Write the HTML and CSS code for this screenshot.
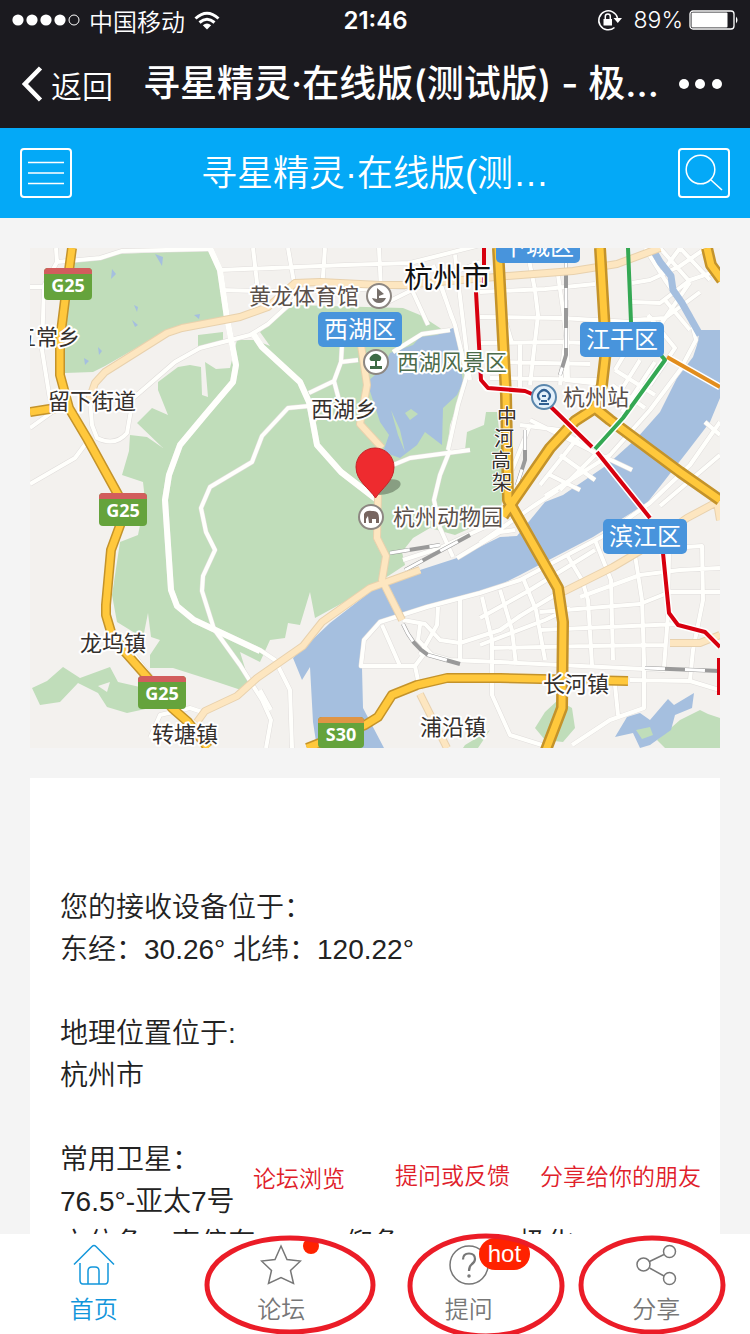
FILE: index.html
```
<!DOCTYPE html>
<html lang="zh-CN">
<head>
  <meta charset="UTF-8">
  <meta name="viewport" content="width=device-width, initial-scale=1.0">
  <title>寻星精灵·在线版(测试版)</title>
  <link rel="stylesheet" href="styles.css">
</head>
<body>

  <!-- Phone status bar -->
  <div class="status-bar">
    <div class="status-left">
      <svg class="signal" viewBox="0 0 68 12" width="68" height="12">
        <g fill="#fff">
          <circle cx="6" cy="6" r="5.6"/><circle cx="20" cy="6" r="5.6"/>
          <circle cx="34" cy="6" r="5.6"/><circle cx="48" cy="6" r="5.6"/>
        </g>
        <circle cx="62" cy="6" r="5" fill="none" stroke="#fff"/>
      </svg>
      <span>中国移动</span>
      <svg viewBox="0 0 26 19" width="26" height="19">
        <g fill="none" stroke="#fff" stroke-width="3">
          <path d="M1.5 7.5 Q13 -3 24.5 7.5"/>
          <path d="M5.5 11.5 Q13 5 20.500 11.5"/>
        </g>
        <path d="M13 18.500 L8.800 14.200 Q13 11 17.200 14.200 Z" fill="#fff"/>
      </svg>
    </div>
    <span class="clock">21:46</span>
    <div class="status-right">
      <svg viewBox="0 0 26 24" width="26" height="24">
        <path d="M17.500 19.500 A9.500 9.500 0 1 1 20.500 10" fill="none" stroke="#fff" stroke-width="1.500"/>
        <path d="M16.500 10 h8.500 l-4.200 5 Z M6.500 11 h8.500 v6.500 h-8.500 Z" fill="#fff"/>
        <path d="M8.300 11 V8.500 a2.500 2.500 0 0 1 5 0 V11" fill="none" stroke="#fff" stroke-width="1.500"/>
      </svg>
      <span class="percent">89%</span>
      <svg viewBox="0 0 50 20" width="50" height="20">
        <rect x="1" y="1" width="44" height="18" rx="3" fill="none" stroke="#fff" stroke-width="1.300"/>
        <rect x="2.500" y="2.500" width="36" height="15" rx="1" fill="#fff"/>
        <path d="M47 6.500 q3 3.500 0 7 Z" fill="#fff"/>
      </svg>
    </div>
  </div>

  <!-- Browser navigation -->
  <nav class="nav-bar">
    <button class="back-button">
      <svg viewBox="0 0 21 36" width="21" height="36"><path d="M18.500 2 L3 18 L18.500 34" fill="none" stroke="#fff" stroke-width="4.500"/></svg>
      返回
    </button>
    <div class="nav-title">寻星精灵·在线版(测试版) - 极…</div>
    <button class="more-button" aria-label="更多">
      <svg viewBox="0 0 44 10" width="44" height="10" fill="#fff"><circle cx="5" cy="5" r="5"/><circle cx="21" cy="5" r="5"/><circle cx="38" cy="5" r="5"/></svg>
    </button>
  </nav>

  <!-- App header -->
  <header class="header">
    <button class="square-button" aria-label="菜单">
      <svg viewBox="0 0 48 46" width="48" height="46" stroke="#fff" stroke-width="1.500"><path d="M6 12.500 H42 M6 23 H42 M6 33.500 H42"/></svg>
    </button>
    <h1>寻星精灵·在线版(测…</h1>
    <button class="square-button" aria-label="搜索">
      <svg viewBox="0 0 48 46" width="48" height="46" fill="none" stroke="#fff" stroke-width="1.500"><circle cx="20.500" cy="19.500" r="14.300"/><path d="M31 30 L42 40"/></svg>
    </button>
  </header>

  <main class="content">
    <svg class="map" viewBox="30 248 690 500">
      <defs>
        <g id="streets">
          <!-- west -->
          <path d="M56 248 L57 262 L100 258 L122 251 L212 249 M57 262 L44 286 L42 350 L50 400 M30 287 H44 M30 428 L55 410"/>
          <path d="M90 400 L92 425 L97 438 Q115 447 127 433 L131 410 M90 438 L75 458 L30 484"/>
          <path d="M131 400 L175 362 L200 348 L250 335 L268 324 L305 290"/>
          <path d="M210 248 L220 270 L227 318 L236 365 L233 382 L205 415 L180 445 L169 475 L165 500 L171 590 L177 606 L194 620 L260 651 M252 332 L262 347 L300 382 L309 402 L317 445 L341 472 L376 499" stroke-width="6"/>
          <path d="M309 406 L288 408 L262 436 L252 462 L210 487 L201 508 L206 532 L215 550 L203 576 L202 591 L214 629 L240 665 L262 700 L271 720 L266 748 M309 393 L334 381 L341 362 L342 345 M334 381 L339 400 M341 362 L358 360 M393 465 L410 458 L470 450 M393 352 L422 334 L450 330"/>
          <path d="M450 450 L440 475 L434 500 L440 528 L453 557 M467 375 L458 405 L448 450"/>
          <!-- north grid -->
          <path d="M220 270 L345 265 L410 263 L500 240 M253 248 L259 300 M288 248 L297 300 M325 248 L322 290 M379 248 L381 290 M220 290 L300 292 L405 287 M380 306 L412 290 L480 262 M433 265 L455 325 L467 375 M412 290 L428 325 M440 282 L452 318 M455 255 L470 380"/>
          <path d="M528 255 L535 290 L538 315 L530 385 M558 275 L563 310 L566 335 L560 385 M480 292 L545 289 L595 284 M480 317 L560 318 L632 322 M480 343 L560 342 L640 345 M490 362 L590 364 M490 378 L600 380 M520 343 L520 390 M505 320 L512 343"/>
          <path d="M566 335 L566 380 L600 384 M566 300 L568 380 M530 420 L590 450 L632 470 M530 425 L512 470 M520 425 L560 430 L605 460 M550 475 L580 490 M560 455 L595 480 M580 435 L540 485 M600 450 L560 490"/>
          <!-- east bank -->
          <path d="M632 283 L650 280 L680 266 L706 248 M632 302 L660 303 L690 280 L720 270 M632 320 L665 318 L700 292 M645 248 L665 280 L690 315 L696 340 L680 370 L650 410 L610 455 L545 496 M660 248 L690 282 M680 248 L710 280 M660 275 L680 248 M690 282 L650 340 M665 300 L690 330 M648 315 L675 348 L650 385"/>
          <path d="M615 370 L655 395 M612 385 L645 408 M640 360 L615 400 M655 362 L622 412 M630 345 L615 370"/>
          <path d="M480 543 L535 505 L558 490 M457 558 L500 532 L515 530 M403 560 L440 548 L500 520"/>
          <path d="M720 422 L690 465 L650 503 L605 535 L520 580 L480 593 L427 607 L380 622 L364 640 L361 666 L415 666 L427 650 M705 422 L720 435 M660 506 L720 455"/>
          <!-- south grid -->
          <path d="M403 620 L425 624 L440 640 L460 643 L500 630 L520 616 L563 590 M420 625 L418 640 L432 655 L450 660 L500 662 L665 670 M438 607 L437 625 L420 655 M460 600 L460 660 M482 597 L492 640 L492 670 L492 695 L510 735 L545 746 M500 590 L512 630 L516 665 M523 578 L536 610 L545 660 M382 625 L400 666"/>
          <path d="M567 555 L582 580 L588 600 L592 665 M595 540 L611 580 L613 660 M635 555 L642 600 L644 660 L644 708 L610 720 L572 745 M669 553 L668 615 L664 667 M480 618 L530 590 L595 550 M480 645 L545 620 L570 608 M490 648 L590 646 L664 645 M540 630 L678 624 M540 612 L640 604 L670 592 L720 592 M580 597 L640 575 L680 570 L720 568 M640 550 L702 546 L703 600 L693 650 L690 680 M630 680 L690 681 L720 690 M615 685 L618 715"/>
          <path d="M415 666 L420 690 M260 650 L275 660 L290 690 L292 748 M260 690 L271 710 M150 738 L160 715 L190 708 L202 712 M130 650 L155 682"/>
        </g>
        <g id="tracks">
          <path d="M390 553 L440 545 M405 570 L470 535 M403 624 Q412 645 428 655 L460 664 M566 248 V355 L560 375 M525 430 V460 L517 485 M645 668 L720 671"/>
        </g>
        <g id="arterials">
          <path d="M89 400 L95 383 L105 372 L167 333 L182 328 L240 317 L268 307 L295 283 L320 282 L380 285 L405 285 L507 276 L573 271 L617 264 L660 248"/>
          <path d="M361 345 L367 385 L360 424 L382 448 M378 495 L377 538 L386 556 L382 580 L402 620 M420 694 L447 748"/>
          <path d="M197 722 L205 711 L237 696 L257 678 L303 646 L322 622 L370 588 L420 570 M563 592 L613 567 L640 551 L687 518 L717 502 L720 520 M670 643 L700 643 L720 635"/>
        </g>
        <path id="ring" d="M72 248 L65 300 L60 340 L60 375 L69 408 L88 440 L121 500 M122 520 L111 550 L106 605 L106 615 L111 632 L125 652 L148 678 L172 708 L188 722 L208 748 M30 412 L62 407 M307 748 L335 737 L365 725 L378 717 L392 695 L417 685 L447 678 L500 678 L628 681"/>
        <path id="elevated" d="M498 248 L506 395 L508 500 L558 588 L563 622 L562 708 L546 750 M600 248 L606 350 L602 385 L595 408 M503 516 L550 448 L575 421 L595 408 L610 420 L680 472 L720 500 M707 248 L711 265 L722 280"/>
      </defs>

      <rect x="30" y="248" width="690" height="500" fill="#f3f1ee"/>

      <!-- parks -->
      <g fill="#c0ddba">
        <path d="M70 262 L118 254 L212 250 L220 275 L226 317 L180 326 L166 331 L105 366 L93 372 L65 373 L60 345 Z M198 335 L223 332 L223 341 L203 349 L198 348 Z"/>
        <path d="M237 340 L230 368 L216 369 L205 362 L208 397 L202 395 L201 367 L190 365 L178 367 L158 382 L158 390 L168 415 L152 408 L137 423 L163 448 L147 437 L130 435 L129 451 L122 475 L143 482 L145 500 L138 535 L120 542 L112 595 L117 622 L143 638 L148 613 L151 637 L160 640 L150 655 L150 668 L173 668 L217 682 L247 692 L248 678 L240 652 L260 662 L270 640 L285 638 L288 623 L300 625 L310 592 L315 618 L370 588 L405 565 L402 552 L413 538 L430 528 L455 535 L500 515 L505 480 L497 412 L486 412 L484 425 L467 432 L465 450 L447 450 L450 425 L464 385 L466 352 L440 328 L420 315 L403 308 L293 305 L260 332 L270 346 L255 340 Z"/>
        <path d="M32 688 L47 681 L63 667 L80 678 L110 667 L118 682 L140 687 L150 708 L127 713 L107 707 L98 693 L78 683 L60 702 L40 705 Z"/>
        <path d="M545 712 L558 700 L572 708 L575 728 L563 742 L545 740 L535 728 Z M465 745 L490 730 L478 748 H463 Z M657 740 L680 720 L700 710 L708 714 L720 718 V748 H665 Z"/>
      </g>
      <path d="M98 686 L110 682 L107 692 Z" fill="#f3f1ee"/>

      <!-- water -->
      <g fill="#a5bfdf">
        <path d="M720 330 L700 330 L697 345 L693 357 L677 378 L660 412 L637 438 L607 465 L563 495 L545 502 L517 536 L500 537 L457 558 L420 570 L383 582 L330 623 L293 658 L302 680 L310 667 L313 722 L317 748 H384 L363 708 L362 668 L363 638 L380 622 L427 607 L480 595 L520 575 L593 537 L647 503 L687 452 L710 422 L720 398 Z"/>
        <path d="M413 345 L420 337 L437 335 L455 327 L463 382 L457 395 L443 408 L442 445 L425 432 L417 445 L400 458 L383 452 L389 435 L380 422 L367 382 L383 368 L390 353 Z"/>
        <path d="M112 269 L116 274 L111 279 Z M155 254 L163 257 L162 266 Z M134 305 L138 307 L137 312 Z M132 320 L138 325 L135 327 Z M98 347 L102 351 L99 355 Z M194 315 l6 -1 l-1 5 Z M84 358 l5 3 l-4 4 Z"/>
        <path d="M615 737 L627 717 L640 713 L650 720 L668 699 L674 705 L694 693 L692 708 L675 715 L671 730 L650 745 L640 748 L633 733 Z"/>
      </g>
      <path d="M636 730 L650 727 L653 735 L642 739 Z M405 413 L411 409 L418 414 L410 420 Z M391 410 L400 430 L405 452 L398 435 Z" fill="#c0ddba"/>

      <g fill="none" stroke-linejoin="round">
        <use href="#streets" stroke="#e0dddb" stroke-width="5"/>
        <use href="#streets" stroke="#fffffc" stroke-width="4"/>
        <!-- canal -->
        <path d="M652 248 L660 262 L671 276 L673 290 L682 303 L700 335" stroke="#a5bfdf" stroke-width="7"/>
        <use href="#tracks" stroke="#999" stroke-width="4"/>
        <use href="#tracks" stroke="#fff" stroke-width="3" stroke-dasharray="20 20"/>
        <use href="#arterials" stroke="#e8d1ad" stroke-width="8"/>
        <use href="#arterials" stroke="#fde6c0" stroke-width="6"/>
        <use href="#ring" stroke="#c4932a" stroke-width="10"/>
        <use href="#ring" stroke="#ffc83c" stroke-width="7"/>
        <use href="#elevated" stroke="#c4932a" stroke-width="12"/>
        <use href="#elevated" stroke="#ffc83c" stroke-width="7"/>
        <g stroke="#fff" stroke-width="7">
          <path d="M480 378 L487 388 L525 391 L532 394 M551 407 L592 447 M597 452 L650 518 M663 553 L669 613 L678 625 L705 632 L720 647 M665 360 L623 418 L595 449 M667 357 L720 387"/>
        </g>
        <g stroke-width="4">
          <path d="M484 248 V284 M476 292 L481 380 L488 388 L525 391 L532 394 M551 407 L592 447 M597 452 L650 518 M663 553 L669 613 L678 625 L705 632 L720 647 M719 658 V695" stroke="#d7000f"/>
          <path d="M628 248 L631 322 M660 354 L665 360 L623 418 L595 449" stroke="#34a853"/>
          <path d="M667 357 L720 387" stroke="#e28d1d"/>
        </g>
      </g>

      <!-- road signs -->
      <g class="sign">
        <rect x="44" y="268" width="48" height="32" rx="4" fill="#65a33c"/><path d="M44 274 v-2 q0 -4 4 -4 h40 q4 0 4 4 v2 Z" fill="#d25d5d"/><text x="68" y="292">G25</text>
        <rect x="99" y="493" width="48" height="33" rx="4" fill="#65a33c"/><path d="M99 499 v-2 q0 -4 4 -4 h40 q4 0 4 4 v2 Z" fill="#d25d5d"/><text x="123" y="517">G25</text>
        <rect x="138" y="676" width="48" height="33" rx="4" fill="#65a33c"/><path d="M138 682 v-2 q0 -4 4 -4 h40 q4 0 4 4 v2 Z" fill="#d25d5d"/><text x="162" y="700">G25</text>
        <rect x="318" y="717" width="46" height="31" rx="4" fill="#65a33c"/><path d="M318 723 v-2 q0 -4 4 -4 h38 q4 0 4 4 v2 Z" fill="#e09545"/><text x="341" y="741">S30</text>
      </g>

      <!-- district tags -->
      <g class="district">
        <rect x="496" y="228" width="84" height="35" rx="5"/><text x="538" y="255">下城区</text>
        <rect x="318" y="312" width="84" height="35" rx="5"/><text x="360" y="338">西湖区</text>
        <rect x="580" y="322" width="84" height="35" rx="5"/><text x="622" y="348">江干区</text>
        <rect x="603" y="519" width="84" height="35" rx="5"/><text x="645" y="545">滨江区</text>
      </g>

      <!-- place names -->
      <g class="place">
        <text x="14" y="345">五常乡</text>
        <text x="48" y="409">留下街道</text>
        <text x="311" y="417">西湖乡</text>
        <text x="80" y="651">龙坞镇</text>
        <text x="152" y="742">转塘镇</text>
        <text x="420" y="735">浦沿镇</text>
        <text x="543" y="692">长河镇</text>
      </g>
      <g class="place road-name">
        <text x="497" y="424">中</text><text x="494" y="446">河</text><text x="491" y="468">高</text><text x="492" y="490">架</text>
      </g>
      <g class="place spot">
        <text x="249" y="304">黄龙体育馆</text>
        <text x="397" y="370" class="scenic">西湖风景区</text>
        <text x="563" y="405">杭州站</text>
        <text x="393" y="525">杭州动物园</text>
      </g>
      <text x="404" y="288" class="city">杭州市</text>

      <!-- spot icons -->
      <g fill="#fff" stroke="#8d8782" stroke-width="2">
        <circle cx="379" cy="296" r="12"/>
        <circle cx="376" cy="362" r="12"/>
        <circle cx="371" cy="517" r="12"/>
        <circle cx="544" cy="397" r="12" fill="#e4f0fa" stroke="#5b87ad"/>
      </g>
      <path d="M377 299 V288 L384 294 L379 296 V298 H386 Q384 303 379 303 Q374 303 372 298 Z" fill="#77706b"/>
      <path d="M375 366 V361 H371 Q368 359 371 356 Q375 352 379 355 Q383 357 380 361 H377 V366 H382 V369 H370 V366 Z" fill="#3e6b45"/>
      <path d="M364 523 V514 Q366 510 372 511 Q379 510 379 518 V523 H376 V519 H372 V523 H369 L368 516 L366 519 V523 Z" fill="#776560"/>
      <path d="M539 404 H549 M541 401 H547 M540 400 Q536 396 540 392 Q544 388 548 392 Q552 396 548 400 M542 396 H546" fill="none" stroke="#315f91" stroke-width="2.200"/>

      <!-- marker -->
      <ellipse cx="386" cy="487" rx="15" ry="7" fill="#4f6049" opacity=".5" transform="rotate(-15 386 487)"/>
      <path d="M375.500 498 C369 488 356 481 356 467 A18.500 18.500 0 0 1 394 467 C394 481 382 488 375.500 498 Z" fill="#ee2b2f" stroke="#c62228"/>
    </svg>

    <section class="info-card">
      <p>您的接收设备位于：<br>东经：30.26° 北纬：120.22°</p>
      <p>地理位置位于:<br>杭州市</p>
      <p>常用卫星：<br>76.5°-亚太7号<br>方位角：南偏东59.28° 仰角：37.99° 极化</p>
    </section>
  </main>

  <!-- Bottom tabs -->
  <footer class="tab-bar">
    <a href="#" class="tab active">
      <svg viewBox="0 0 42 42" width="42" height="42"><path d="M1 20.500 L19 2.500 Q21 .5 23 2.500 L41 20.500 M7 19 V36 Q7 40 10 40 H32 Q35 40 35 36 V19 M15 40 V27 Q15 23 19 23 H22 Q26 23 26 27 V40"/></svg>
      首页
    </a>
    <a href="#" class="tab">
      <svg viewBox="0 0 42 42" width="42" height="42"><path d="M21 2 L27 15.500 L40.500 17 L30.500 26.500 L33.500 39.500 L21 33.500 L8.500 39.500 L11.500 26.500 L1.500 17 L15 15.500 Z"/></svg>
      论坛
      <span class="dot"></span>
    </a>
    <a href="#" class="tab">
      <svg viewBox="0 0 42 42" width="42" height="42"><circle cx="21" cy="21" r="19"/><path d="M15 15.500 Q15 9.500 21 9.500 Q27 9.500 27 15 Q27 18 23.500 20.500 Q21 22.500 21 27" stroke-width="2.200"/><circle cx="21" cy="32" r="1" stroke-width="1.500"/></svg>
      提问
      <span class="badge">hot</span>
    </a>
    <a href="#" class="tab">
      <svg viewBox="0 0 42 42" width="42" height="42"><circle cx="8.500" cy="20.500" r="6.500"/><circle cx="34.500" cy="7.500" r="6"/><circle cx="34.500" cy="34.500" r="6"/><path d="M14.500 17.500 L29 10.500 M14.500 24 L29 32"/></svg>
      分享
    </a>
  </footer>

  <!-- Hand-drawn notes over the tabs -->
  <svg class="notes" viewBox="0 0 750 180">
    <text x="253" y="33">论坛浏览</text>
    <text x="395" y="30">提问或反馈</text>
    <text x="540" y="31">分享给你的朋友</text>
    <ellipse cx="290" cy="131" rx="83" ry="47"/>
    <ellipse cx="486" cy="132" rx="76" ry="50"/>
    <ellipse cx="652" cy="131" rx="71" ry="47"/>
  </svg>

</body>
</html>
```
FILE: styles.css
```
/* Global Styles */
* {
  margin: 0;
  padding: 0;
  box-sizing: border-box;
}

body {
  position: relative;
  display: flex;
  flex-direction: column;
  height: 100vh;
  overflow: hidden;
  background-color: #f4f4f4;
  color: #222;
  font-family: 'Liberation Sans', 'Noto Sans CJK SC', sans-serif;
  font-size: 28px;
  font-weight: 350;
}

button {
  background: none;
  border: none;
  color: inherit;
  font: inherit;
  cursor: pointer;
}

svg {
  display: block;
  flex: none;
}

/* Status bar */
.status-bar {
  display: grid;
  grid-template-columns: 1fr auto 1fr;
  align-items: center;
  height: 40px;
  padding: 0 11px 0 12px;
  background-color: #1b1a1f;
  color: #fff;
  font-family: 'Inter', 'Noto Sans CJK SC', sans-serif;
  font-size: 24px;
}

.status-left,
.status-right {
  display: flex;
  align-items: center;
}

.status-left {
  gap: 9px;
}

.status-right {
  justify-content: flex-end;
  gap: 6px;
}

.percent {
  margin-left: 5px;
  font-size: 23px;
}

.clock {
  font-weight: 600;
}

/* Browser navigation */
.nav-bar {
  display: flex;
  align-items: center;
  height: 88px;
  padding: 0 28px 0 22px;
  background-color: #1b1a1f;
  color: #fff;
}

.back-button {
  display: flex;
  align-items: center;
  gap: 8px;
  font-size: 31px;
  white-space: nowrap;
}

.nav-title {
  flex: 1;
  margin: 0 20px 0 30px;
  font-family: 'Inter', 'Noto Sans CJK SC', sans-serif;
  font-size: 37px;
  font-weight: 500;
  line-height: 54px;
  white-space: nowrap;
}

/* App header */
.header {
  display: flex;
  justify-content: space-between;
  align-items: center;
  height: 90px;
  padding: 0 20px;
  background-color: #04a9f7;
  color: #fff;
}

.header h1 {
  padding-bottom: 6px;
  font-size: 36px;
  font-weight: 350;
}

.square-button {
  width: 52px;
  height: 50px;
  border: 2px solid #fff;
  border-radius: 4px;
}

/* Content */
.content {
  flex: 1;
  min-height: 0;
  padding: 30px 30px 0;
  overflow: hidden;
}

.map {
  width: 100%;
  height: auto;
  margin-bottom: 30px;
  font-family: 'Noto Sans CJK SC', sans-serif;
}

.sign text {
  fill: #fff;
  font-family: 'Noto Sans', sans-serif;
  font-size: 18px;
  font-weight: 700;
  text-anchor: middle;
}

.district rect {
  fill: #4894dc;
}

.district text {
  fill: #fff;
  font-size: 24px;
  font-weight: 400;
  text-anchor: middle;
}

.place text,
.city {
  fill: #35302d;
  stroke: #fff;
  stroke-width: 4px;
  stroke-linejoin: round;
  paint-order: stroke;
  font-size: 22px;
  font-weight: 400;
}

.road-name text {
  font-size: 20px;
  stroke-width: 2px;
}

.spot text {
  fill: #5a504b;
}

.spot .scenic {
  fill: #4b6b4b;
}

.city {
  fill: #111;
  font-size: 29px;
}

.info-card {
  padding: 109px 30px 30px;
  background-color: #fff;
  line-height: 42px;
}

.info-card p {
  margin-bottom: 42px;
  white-space: nowrap;
}

/* Bottom tabs */
.tab-bar {
  display: flex;
  height: 100px;
  background-color: #fff;
}

.tab {
  position: relative;
  flex: 1;
  display: flex;
  flex-direction: column;
  align-items: center;
  gap: 8px;
  padding-top: 10px;
  color: #777;
  font-size: 24px;
  line-height: 32px;
  text-decoration: none;
}

.tab svg {
  fill: none;
  stroke: currentColor;
  stroke-width: 1.5px;
}

.tab.active {
  color: #1296db;
}

.dot,
.badge {
  position: absolute;
  left: 50%;
  background-color: #ff2200;
}

.dot {
  top: 4px;
  width: 16px;
  height: 16px;
  margin-left: 22px;
  border-radius: 50%;
}

.badge {
  top: 4px;
  margin-left: 10px;
  padding: 0 9px;
  border-radius: 16px;
  color: #fff;
}

/* Notes */
.notes {
  position: absolute;
  left: 0;
  bottom: 0;
  width: 100%;
  pointer-events: none;
}

.notes text {
  fill: #e0202a;
  font-size: 23px;
}

.notes ellipse {
  fill: none;
  stroke: #eb1c27;
  stroke-width: 5px;
}
```
